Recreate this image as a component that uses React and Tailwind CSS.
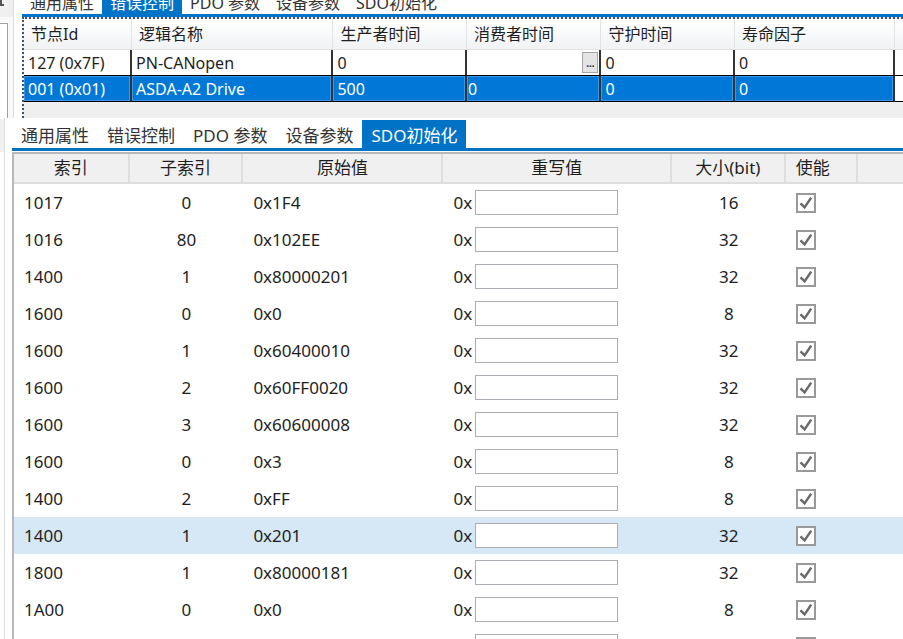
import React, { useState } from "react";

const TABS = ["通用属性", "错误控制", "PDO 参数", "设备参数", "SDO初始化"];

const NODES = [
  { id: "127 (0x7F)", name: "PN-CANopen", producer: "0", consumer: "", guard: "0", life: "0" },
  { id: "001 (0x01)", name: "ASDA-A2 Drive", producer: "500", consumer: "0", guard: "0", life: "0" },
];

const NODE_COLUMNS = ["节点Id", "逻辑名称", "生产者时间", "消费者时间", "守护时间", "寿命因子"];

const SDO_ROWS = [
  { index: "1017", sub: "0", raw: "0x1F4", size: 16 },
  { index: "1016", sub: "80", raw: "0x102EE", size: 32 },
  { index: "1400", sub: "1", raw: "0x80000201", size: 32 },
  { index: "1600", sub: "0", raw: "0x0", size: 8 },
  { index: "1600", sub: "1", raw: "0x60400010", size: 32 },
  { index: "1600", sub: "2", raw: "0x60FF0020", size: 32 },
  { index: "1600", sub: "3", raw: "0x60600008", size: 32 },
  { index: "1600", sub: "0", raw: "0x3", size: 8 },
  { index: "1400", sub: "2", raw: "0xFF", size: 8 },
  { index: "1400", sub: "1", raw: "0x201", size: 32 },
  { index: "1800", sub: "1", raw: "0x80000181", size: 32 },
  { index: "1A00", sub: "0", raw: "0x0", size: 8 },
  { index: "", sub: "", raw: "", size: "" },
];

// Cell of the node table; selected cells get a lighter inner frame
const NodeCell = ({ selected, flush, children }) => (
  <td className="border-r-2 border-b border-r-[#333] border-b-black p-0">
    <div
      className={`flex h-[25px] items-center justify-between border ${flush ? "pl-0" : "pl-[3px]"} ${
        selected ? "border-[#3f96e4] bg-[#0078d7] text-white" : "border-white bg-white"
      }`}
    >
      {children}
    </div>
  </td>
);

const NodePanel = () => {
  const [tab, setTab] = useState(1);
  const [selected, setSelected] = useState(1);

  return (
    <section className="flex h-[118px] shrink-0 overflow-hidden text-[16px] leading-5">
      <div className="flex w-[14px] shrink-0 flex-col border-r border-[#dcdcdc] bg-[#f9f9f9]">
        <div className="h-[17px] bg-[#f0f0f0]">
          <svg viewBox="0 0 4 6" className="h-[6px] w-1" fill="#555">
            <path d="M0 0h2v4h2v2H0z" />
          </svg>
        </div>
        <div className="mt-[6px] w-2 grow border-t border-r border-[#a0a0a0] bg-white" />
      </div>
      <div className="flex min-w-0 grow flex-col pl-2">
        <div className="flex h-[14px] shrink-0 items-end overflow-hidden">
          {TABS.map((label, i) => (
            <button
              key={label}
              onClick={() => setTab(i)}
              className={`h-7 shrink-0 px-2 pt-1.5 whitespace-nowrap ${tab === i ? "bg-[#0173c7] text-white" : "text-[#333]"}`}
            >
              {label}
            </button>
          ))}
        </div>
        <div className="h-[3px] shrink-0 bg-[#0173c7]" />
        <div className="grow border-t-2 border-l-2 border-dotted border-[#44546a] bg-[#efefef]">
          <table className="w-full table-fixed border-separate border-spacing-0 text-left">
            <colgroup>
              <col className="w-[12.3%]" />
              <col className="w-[22.9%]" />
              <col className="w-[15.2%]" />
              <col className="w-[15.3%]" />
              <col className="w-[15.2%]" />
              <col className="w-[18.2%]" />
              <col />
            </colgroup>
            <thead>
              <tr className="bg-linear-to-b from-white to-[#f0f2f4]">
                {NODE_COLUMNS.map((label) => (
                  <th key={label} className="h-[31px] border-r border-b border-[#e2e3e5] p-0 pl-[7px] font-normal">
                    {label}
                  </th>
                ))}
                <td className="border-b border-[#e2e3e5]" />
              </tr>
            </thead>
            <tbody>
              {NODES.map((node, i) => (
                <tr key={node.id} onClick={() => setSelected(i)}>
                  <NodeCell selected={selected === i}>{node.id}</NodeCell>
                  <NodeCell selected={selected === i}>{node.name}</NodeCell>
                  <NodeCell selected={selected === i}>{node.producer}</NodeCell>
                  <NodeCell selected={selected === i} flush>
                    {node.consumer}
                    {i === 0 && (
                      <button
                        aria-label="消费者时间"
                        className="ml-auto flex h-[21px] w-4 items-center justify-center border border-[#a5a5a5] bg-[#e4e4e4] text-[10px] font-bold"
                      >
                        ...
                      </button>
                    )}
                  </NodeCell>
                  <NodeCell selected={selected === i}>{node.guard}</NodeCell>
                  <NodeCell selected={selected === i}>{node.life}</NodeCell>
                  <td className="border-b border-black bg-white" />
                </tr>
              ))}
            </tbody>
          </table>
        </div>
      </div>
    </section>
  );
};

const Check = ({ checked, label, onChange }) => (
  <label className="relative flex size-5 border-2 border-[#999] bg-white">
    <input
      type="checkbox"
      aria-label={label}
      checked={checked}
      onChange={onChange}
      className="absolute inset-0 appearance-none"
    />
    {checked && (
      <svg viewBox="0 0 16 16" className="size-4" fill="none" stroke="#6a6a6a" strokeWidth="2.5">
        <path d="M2.5 8.3 L6.6 12.4 L13.2 2.6" />
      </svg>
    )}
  </label>
);

const SdoPanel = () => {
  const [tab, setTab] = useState(4);
  const [selected, setSelected] = useState(9);
  const [overrides, setOverrides] = useState(SDO_ROWS.map(() => ""));
  const [enabled, setEnabled] = useState(SDO_ROWS.map(() => true));

  const head = "h-[30px] border-r-2 border-b-2 border-[#dedede] p-0 font-normal";

  return (
    <section className="flex min-h-0 grow text-[17px] leading-6">
      <div className="w-[5px] shrink-0 border-r border-[#dcdcdc]">
        <div className="mt-px h-[33px] bg-[#f0f0f0]" />
      </div>
      <div className="flex min-w-0 grow flex-col pl-[7px]">
        <div className="flex h-[30px] shrink-0 items-end">
          {TABS.map((label, i) => (
            <button
              key={label}
              onClick={() => setTab(i)}
              className={`h-7 shrink-0 px-[9px] pt-[3px] whitespace-nowrap ${tab === i ? "bg-[#0173c7] text-white" : "text-[#333]"}`}
            >
              {label}
            </button>
          ))}
        </div>
        <div className="mb-px h-[3px] shrink-0 bg-[#0173c7]" />
        <div className="min-h-0 grow overflow-hidden border-t-2 border-l-2 border-[#b8b8ba]">
          <table className="w-full table-fixed border-separate border-spacing-0">
            <colgroup>
              <col className="w-[13%]" />
              <col className="w-[12.8%]" />
              <col className="w-[22.5%]" />
              <col className="w-[25.7%]" />
              <col className="w-[12.8%]" />
              <col className="w-[8.1%]" />
              <col />
            </colgroup>
            <thead className="bg-[#f0f0f0]">
              <tr>
                <th className={head}>索引</th>
                <th className={head}>子索引</th>
                <th className={head}>原始值</th>
                <th className={head}>重写值</th>
                <th className={head}>大小(bit)</th>
                <th className={`${head} pl-[10px] text-left`}>使能</th>
                <td className="border-b-2 border-[#dedede]" />
              </tr>
            </thead>
            <tbody>
              {SDO_ROWS.map((row, i) => (
                <tr key={i} onClick={() => setSelected(i)} className={selected === i ? "bg-[#d6e8f6]" : "bg-white"}>
                  <td className="h-[37px] p-0 pl-[10px]">{row.index}</td>
                  <td className="p-0 text-center">{row.sub}</td>
                  <td className="p-0 pl-[10px]">{row.raw}</td>
                  <td className="p-0 pl-[10px]">
                    <label className="flex items-center gap-[3px]">
                      <span className="w-[19px]">{row.index && "0x"}</span>
                      <input
                        type="text"
                        value={overrides[i]}
                        onChange={(e) => setOverrides(overrides.map((v, n) => (n === i ? e.target.value : v)))}
                        className="h-[25px] w-[143px] border border-[#abadb3] bg-white px-1 outline-none"
                      />
                    </label>
                  </td>
                  <td className="p-0 text-center">{row.size}</td>
                  <td className="p-0 pl-[10px]">
                    <Check
                      label={`使能 ${row.index}`}
                      checked={enabled[i]}
                      onChange={() => setEnabled(enabled.map((v, n) => (n === i ? !v : v)))}
                    />
                  </td>
                  <td />
                </tr>
              ))}
            </tbody>
          </table>
        </div>
      </div>
    </section>
  );
};

function App() {
  return (
    <div className="flex h-screen flex-col overflow-hidden bg-white font-['Noto_Sans','Noto_Sans_CJK_SC',sans-serif] text-[#1e1e1e]">
      <NodePanel />
      <SdoPanel />
    </div>
  );
}

export default App;
